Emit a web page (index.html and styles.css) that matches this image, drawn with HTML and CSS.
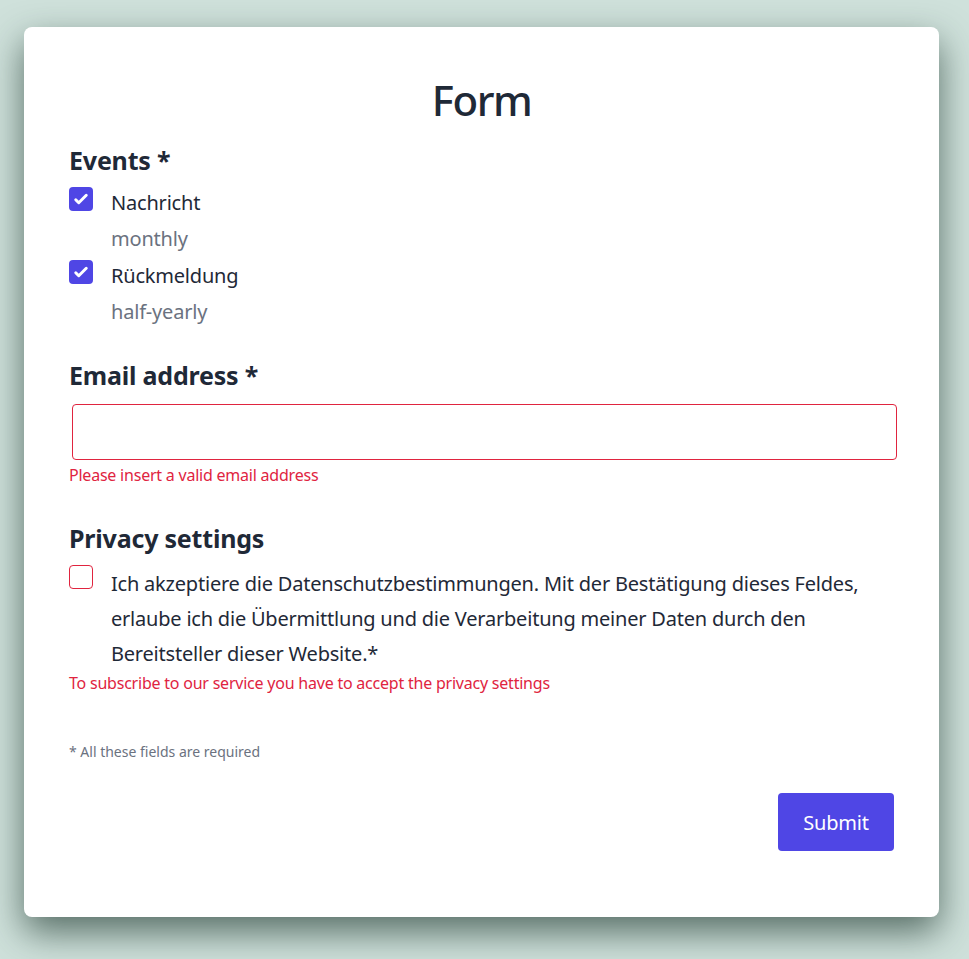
FILE: index.html
```html
<!DOCTYPE html>
<html lang="de">
<head>
<meta charset="utf-8">
<title>Form</title>
<link rel="stylesheet" href="styles.css">
</head>
<body>
<main class="card">
  <h1 class="title">Form</h1>

  <section class="group">
    <h2 class="label">Events *</h2>
    <div class="options">
      <div class="option">
        <span class="box box-checked">
          <svg viewBox="0 0 16 16" width="24" height="24"><path fill="#fff" d="M12.207 4.793a1 1 0 010 1.414l-5 5a1 1 0 01-1.414 0l-2-2a1 1 0 011.414-1.414L6.5 9.086l4.293-4.293a1 1 0 011.414 0z"/></svg>
        </span>
        <div class="option-text">
          <div class="option-name">Nachricht</div>
          <div class="option-desc">monthly</div>
        </div>
      </div>
      <div class="option">
        <span class="box box-checked">
          <svg viewBox="0 0 16 16" width="24" height="24"><path fill="#fff" d="M12.207 4.793a1 1 0 010 1.414l-5 5a1 1 0 01-1.414 0l-2-2a1 1 0 011.414-1.414L6.5 9.086l4.293-4.293a1 1 0 011.414 0z"/></svg>
        </span>
        <div class="option-text">
          <div class="option-name">Rückmeldung</div>
          <div class="option-desc">half-yearly</div>
        </div>
      </div>
    </div>
  </section>

  <section class="group group-email">
    <h2 class="label">Email address *</h2>
    <input class="input input-error" type="email" aria-label="Email address">
    <p class="error">Please insert a valid email address</p>
  </section>

  <section class="group group-privacy">
    <h2 class="label">Privacy settings</h2>
    <div class="consent">
      <span class="box box-error"></span>
      <p class="consent-text">Ich akzeptiere die Datenschutzbestimmungen. Mit der Bestätigung dieses Feldes, erlaube ich die Übermittlung und die Verarbeitung meiner Daten durch den Bereitsteller dieser Website.*</p>
    </div>
    <p class="error">To subscribe to our service you have to accept the privacy settings</p>
  </section>

  <p class="note">* All these fields are required</p>

  <div class="actions">
    <button class="submit" type="button">Submit</button>
  </div>
</main>
</body>
</html>
```

FILE: styles.css
```css
* { box-sizing: border-box; }

html, body {
  margin: 0;
  padding: 0;
}

body {
  background: #cfe1db;
  font-family: "Noto Sans", "Open Sans", sans-serif;
  color: #1f2937;
  height: 959px;
  overflow: hidden;
  padding-top: 27px;
  padding-left: 24px;
}

.card {
  width: 915px;
  height: 890px;
  background: #fff;
  border-radius: 8px;
  box-shadow: 0 15px 36px rgba(30, 55, 45, 0.68);
  padding: 48px 45px 0 45px;
}

.title {
  margin: 0;
  text-align: center;
  font-size: 42px;
  line-height: 50px;
  font-weight: 500;
  letter-spacing: -1.5px;
  color: #1f2937;
}

.label {
  margin: 0;
  font-size: 25px;
  line-height: 32px;
  font-weight: 700;
  letter-spacing: -0.2px;
  color: #1f2937;
}

.group { margin-top: 19px; }
.group-email { margin-top: 29px; }
.group-privacy { margin-top: 35px; }

.options { margin-top: 8px; }

.option {
  display: flex;
  gap: 18px;
  align-items: flex-start;
}

.box {
  flex: none;
  width: 24px;
  height: 24px;
  border-radius: 4px;
  margin-top: 3px;
  display: block;
}

.box svg { display: block; }

.box-checked { background: #4f46e5; }

.box-error {
  border: 1px solid #e0243f;
  background: #fff;
  margin-top: 2px;
}

.option-text {
  padding-top: 1px;
  font-size: 20px;
  line-height: 36px;
  letter-spacing: -0.2px;
}

.option-name { color: #1f2937; }
.option-desc { color: #6b7280; }

.input {
  display: block;
  width: 100%;
  height: 56px;
  margin: 13px 0 0 3px;
  border: 1px solid #e0243f;
  border-radius: 4px;
  background: #fff;
  font: inherit;
  font-size: 20px;
  padding: 0 12px;
  outline: none;
}

.error {
  margin: 3px 0 0 0;
  font-size: 16px;
  line-height: 24px;
  letter-spacing: -0.22px;
  color: #e0243f;
}

.consent {
  display: flex;
  gap: 18px;
  align-items: flex-start;
  margin-top: 9px;
}

.consent-text {
  margin: 0;
  padding-top: 3px;
  font-size: 20px;
  line-height: 35px;
  letter-spacing: -0.21px;
  color: #1f2937;
}

.consent + .error { margin-top: 0; }

.note {
  margin: 47px 0 0 0;
  font-size: 14px;
  line-height: 20px;
  color: #6b7280;
}

.actions {
  display: flex;
  justify-content: flex-end;
  margin-top: 31px;
}

.submit {
  width: 116px;
  height: 58px;
  border: 0;
  border-radius: 4px;
  background: #4f46e5;
  color: #fff;
  font: inherit;
  font-size: 20px;
  letter-spacing: -0.2px;
  cursor: pointer;
}
```
